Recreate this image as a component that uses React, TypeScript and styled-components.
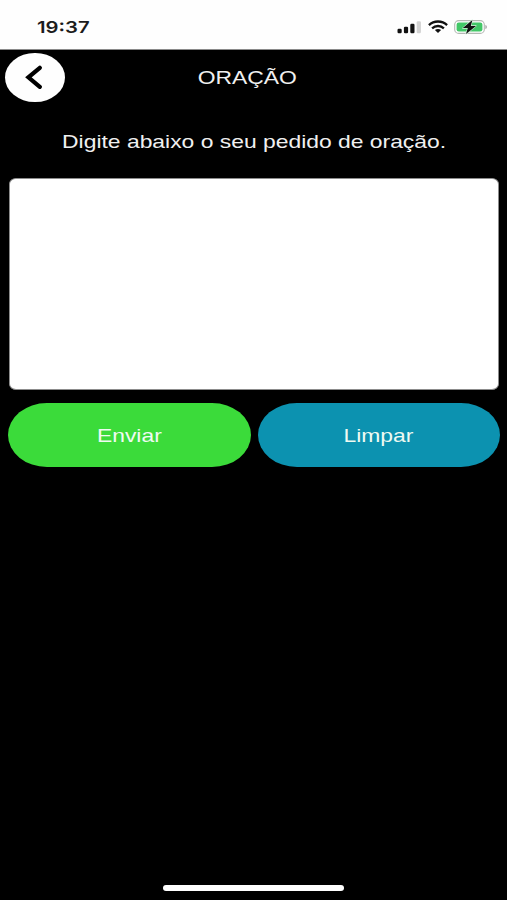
import React from "react";
import styled, { createGlobalStyle } from "styled-components";

const SIGNAL_BARS = [
  { x: 0.5, height: 4.5, color: "#111" },
  { x: 6.9, height: 6.5, color: "#111" },
  { x: 13.3, height: 9.5, color: "#111" },
  { x: 19.7, height: 12, color: "#d2d2d2" },
];

const SignalIcon: React.FC = () => (
  <svg width="25" height="14" viewBox="0 0 25 14">
    {SIGNAL_BARS.map(({ x, height, color }) => (
      <rect key={x} x={x} y={13.3 - height} width="4.2" height={height} rx="1.2" fill={color} />
    ))}
  </svg>
);

const WifiIcon: React.FC = () => (
  <svg width="20" height="14" viewBox="0 0 20 14" fill="none" stroke="#111" strokeWidth="2.3">
    <path d="M0.9 5.1C6 0.3 14 0.3 19.1 5.1" />
    <path d="M4.1 8.3C7.4 5.2 12.6 5.2 15.9 8.3" />
    <path d="M6.9 10.1C8.7 8.7 11.3 8.7 13.1 10.1L10 13Z" fill="#111" stroke="none" />
  </svg>
);

const BatteryIcon: React.FC = () => (
  <svg width="34" height="16" viewBox="0 0 34 16">
    <rect x="0.7" y="1.6" width="29.6" height="12.8" rx="4" fill="#fff" stroke="#b3b8b3" strokeWidth="1.1" />
    <rect x="2.6" y="3.5" width="25.8" height="9" rx="2.2" fill="#42c767" />
    <path d="M31.3 5.9C33.5 6.6 33.5 9.2 31.3 9.9Z" fill="#aaa" />
    <path
      d="M18.4 1L8.8 9.1H13.8L12 15L22 6.9H16.8Z"
      fill="#111"
      stroke="#d8f2df"
      strokeWidth="1.2"
      paintOrder="stroke"
      strokeLinejoin="round"
    />
  </svg>
);

const BackIcon: React.FC = () => (
  <svg width="18" height="25" viewBox="0 0 18 25" fill="none">
    <path
      d="M14.8 2.8L3.4 12.3L14.8 21.8"
      stroke="#000"
      strokeWidth="4.2"
      strokeLinecap="round"
      strokeLinejoin="miter"
    />
  </svg>
);

const App: React.FC = () => {
  const [message, setMessage] = React.useState("");

  return (
    <SScreen>
      <GlobalStyle />
      <SStatusBar>
        <STime>19:37</STime>
        <SStatusIcons>
          <SignalIcon />
          <WifiIcon />
          <BatteryIcon />
        </SStatusIcons>
      </SStatusBar>
      <SHeader>
        <SBackButton type="button" aria-label="Voltar">
          <BackIcon />
        </SBackButton>
        <STitle>
          <SWideText>ORAÇÃO</SWideText>
        </STitle>
      </SHeader>
      <SForm onSubmit={(e) => e.preventDefault()}>
        <SLabel htmlFor="message">
          <SWideText>Digite abaixo o seu pedido de oração.</SWideText>
        </SLabel>
        <STextArea id="message" value={message} onChange={(e) => setMessage(e.target.value)} />
        <SButtons>
          <SButton type="submit" $color="#3bdb3a">
            <SWideText>Enviar</SWideText>
          </SButton>
          <SButton type="button" $color="#0c92b0" onClick={() => setMessage("")}>
            <SWideText>Limpar</SWideText>
          </SButton>
        </SButtons>
      </SForm>
      <SHomeIndicator />
    </SScreen>
  );
};

const GlobalStyle = createGlobalStyle`
  * {
    box-sizing: border-box;
  }

  body {
    margin: 0;
    background: #000;
  }
`;

const SScreen = styled.div`
  display: flex;
  flex-direction: column;
  width: 507px;
  height: 900px;
  overflow: hidden;
  background: #000;
  color: #f0f0f0;
  font-family: "Liberation Sans", Arial, sans-serif;
  font-size: 18.6px;
`;

const SStatusBar = styled.div`
  display: flex;
  align-items: center;
  justify-content: space-between;
  height: 50px;
  padding: 4px 19px 0 37px;
  border-bottom: 1px solid #8a8a8a;
  background: #fefefe;
`;

const STime = styled.span`
  color: #1c1c1c;
  font-family: Inter, sans-serif;
  font-size: 16.5px;
  font-weight: 600;
  line-height: 20px;
  transform: scaleX(1.23);
  transform-origin: left center;
`;

const SStatusIcons = styled.div`
  display: flex;
  align-items: center;
  gap: 6px;
`;

const SHeader = styled.header`
  display: grid;
  grid-template-columns: 60px 1fr 60px;
  align-items: center;
  height: 55px;
  padding: 0 18px 0 5px;
`;

const SBackButton = styled.button`
  display: flex;
  align-items: center;
  justify-content: center;
  width: 59.5px;
  height: 49px;
  padding: 0 2px 0 0;
  border: 0;
  border-radius: 50%;
  background: #fefefe;
`;

const STitle = styled.h1`
  margin: 0;
  font-size: inherit;
  font-weight: 400;
  line-height: 24px;
  text-align: center;
`;

/* stretched lettering used across the screen */
const SWideText = styled.span`
  display: inline-block;
  white-space: nowrap;
  transform: scaleX(1.23);
`;

const SForm = styled.form`
  display: flex;
  flex-direction: column;
  padding: 25px 7px 0 8px;
`;

const SLabel = styled.label`
  height: 48px;
  line-height: 24px;
  text-align: center;
`;

const STextArea = styled.textarea`
  height: 212px;
  margin: 0 1px;
  padding: 10px;
  border: 1px solid #8c8c8c;
  border-radius: 7px / 6px;
  outline: 0;
  background: #fff;
  font: inherit;
  resize: none;
`;

const SButtons = styled.div`
  display: grid;
  grid-template-columns: 1fr 1fr;
  gap: 7px;
  margin-top: 13px;
`;

const SButton = styled.button<{ $color: string }>`
  height: 64px;
  padding: 2px 0 0;
  border: 0;
  border-radius: 39px / 32px;
  background: ${({ $color }) => $color};
  color: #effaf2;
  font: inherit;
`;

const SHomeIndicator = styled.div`
  width: 181px;
  height: 6px;
  margin: auto auto 9px;
  border-radius: 3px;
  background: #fff;
`;

export default App;
